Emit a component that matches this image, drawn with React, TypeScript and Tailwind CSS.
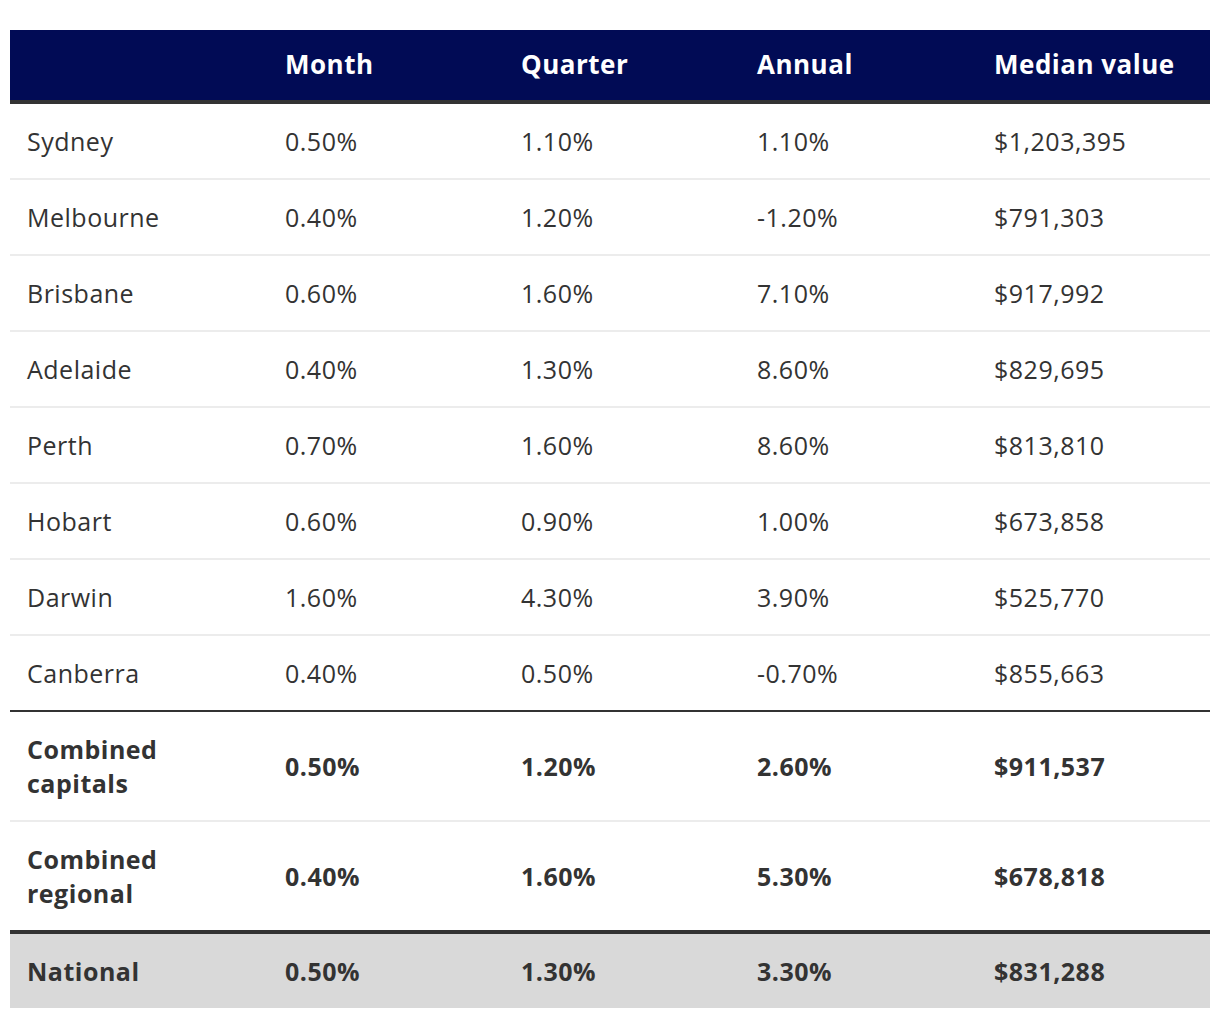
import React from "react";

const rows: [string, string, string, string, string][] = [
  ["Sydney", "0.50%", "1.10%", "1.10%", "$1,203,395"],
  ["Melbourne", "0.40%", "1.20%", "-1.20%", "$791,303"],
  ["Brisbane", "0.60%", "1.60%", "7.10%", "$917,992"],
  ["Adelaide", "0.40%", "1.30%", "8.60%", "$829,695"],
  ["Perth", "0.70%", "1.60%", "8.60%", "$813,810"],
  ["Hobart", "0.60%", "0.90%", "1.00%", "$673,858"],
  ["Darwin", "1.60%", "4.30%", "3.90%", "$525,770"],
  ["Canberra", "0.40%", "0.50%", "-0.70%", "$855,663"],
];

const grid = "grid grid-cols-[258px_236px_236px_237px_233px]";

export default function App() {
  return (
    <div
      className="min-h-[1018px] w-[1220px] bg-white pt-[30px] px-[10px] text-[#333333]"
      style={{ fontFamily: "'Open Sans', 'Liberation Sans', sans-serif" }}
    >
      <div className="w-[1200px]">
        <div className={`${grid} bg-[#010b55] text-white font-bold text-[26px] tracking-[0.5px] leading-[34px] border-b-4 border-[#333333]`}>
          <div className="px-[17px] pt-[17px] pb-[19px]"></div>
          <div className="px-[17px] pt-[17px] pb-[19px]">Month</div>
          <div className="px-[17px] pt-[17px] pb-[19px]">Quarter</div>
          <div className="px-[17px] pt-[17px] pb-[19px]">Annual</div>
          <div className="px-[17px] pt-[17px] pb-[19px] whitespace-nowrap">Median value</div>
        </div>
        {rows.map((r, i) => (
          <div
            key={r[0]}
            className={`${grid} text-[25px] tracking-[0.5px] leading-[34px] ${i < rows.length - 1 ? "border-b-2 border-[#ececec]" : "border-b-2 border-[#333333]"}`}
          >
            {r.map((c, j) => (
              <div key={j} className="px-[17px] pt-[20px] pb-[20px]">
                {c}
              </div>
            ))}
          </div>
        ))}
        {[
          ["Combined", "capitals", "0.50%", "1.20%", "2.60%", "$911,537"],
          ["Combined", "regional", "0.40%", "1.60%", "5.30%", "$678,818"],
        ].map((r, i) => (
          <div
            key={r[1]}
            className={`${grid} text-[25px] tracking-[0.5px] leading-[34px] font-bold items-center ${i === 0 ? "border-b-2 border-[#ececec]" : "border-b-4 border-[#333333]"}`}
          >
            <div className="px-[17px] pt-[20px] pb-[20px]">
              {r[0]}
              <br />
              {r[1]}
            </div>
            <div className="px-[17px]">{r[2]}</div>
            <div className="px-[17px]">{r[3]}</div>
            <div className="px-[17px]">{r[4]}</div>
            <div className="px-[17px]">{r[5]}</div>
          </div>
        ))}
        <div className={`${grid} text-[25px] tracking-[0.5px] leading-[34px] font-bold bg-[#d9d9d9]`}>
          {["National", "0.50%", "1.30%", "3.30%", "$831,288"].map((c, j) => (
            <div key={j} className="px-[17px] pt-[20px] pb-[20px]">
              {c}
            </div>
          ))}
        </div>
      </div>
    </div>
  );
}
